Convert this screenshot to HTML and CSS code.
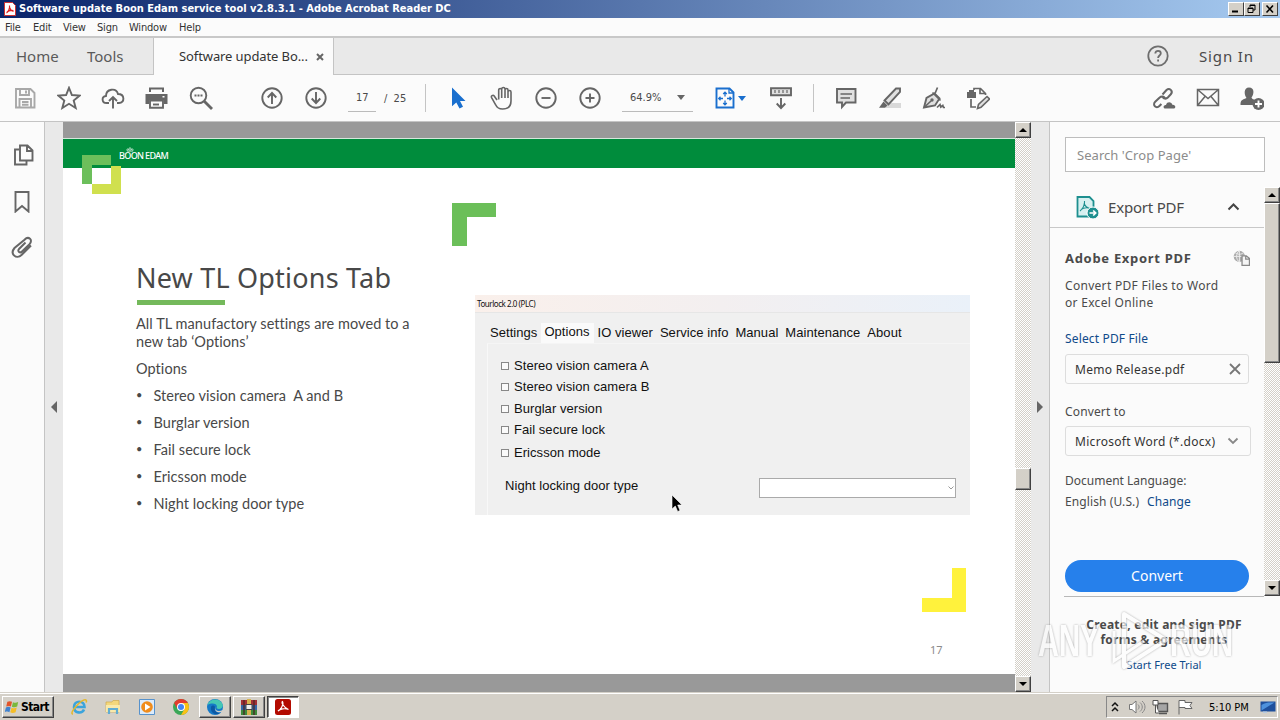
FILE: index.html
```html
<!DOCTYPE html>
<html lang="en">
<head>
    <meta charset="UTF-8">
    <meta name="viewport" content="width=device-width, initial-scale=1.0">
    <title>Software update Boon Edam service tool v2.8.3.1 - Adobe Acrobat Reader DC</title>
    <link rel="stylesheet" href="styles.css">
</head>
<body>
    <!-- Title bar -->
    <div class="title-bar">
        <svg class="app-icon" viewBox="0 0 12 14"><path d="M.5.5h8l3 3v10H.5z" fill="#fff" stroke="#c33"/><path d="M2.500 11c2-1 3.500-5 3-7.500M5.500 5c.5 2.500 2 4 4 4.500M3 10c1.500-1.500 4-2 6.500-1.500" fill="none" stroke="#d22" stroke-width="1.200"/></svg>
        <span class="title-text">Software update Boon Edam service tool v2.8.3.1 - Adobe Acrobat Reader DC</span>
        <div class="window-buttons">
            <span class="win-btn"><svg viewBox="0 0 12 10"><path d="M2 7.500h6" stroke="#000" stroke-width="2"/></svg></span>
            <span class="win-btn"><svg viewBox="0 0 12 10"><path d="M4 3V1h5v5H7M4 1.500h5M2 4h5v4.500H2zM2 4.500h5" fill="none" stroke="#000"/></svg></span>
            <span class="win-btn last"><svg viewBox="0 0 12 10"><path d="M2.500 1.500l6.500 7m0-7l-6.500 7" stroke="#000" stroke-width="1.600"/></svg></span>
        </div>
    </div>

    <!-- Menu -->
    <div class="menu-bar">
        <span class="m-file">File</span>
        <span class="m-edit">Edit</span>
        <span class="m-view">View</span>
        <span class="m-sign">Sign</span>
        <span class="m-window">Window</span>
        <span class="m-help">Help</span>
    </div>

    <!-- Tabs -->
    <div class="tab-bar">
        <div class="tabs-left"><span class="t-home">Home</span><span class="t-tools">Tools</span></div>
        <div class="tab-active"><span class="t-doc">Software update Bo...</span><svg viewBox="0 0 8 8"><path d="M1 1l6 6m0-6L1 7" stroke="#666" stroke-width="2"/></svg></div>
        <div class="tabs-right">
            <svg viewBox="0 0 24 24"><circle cx="12" cy="12" r="9.700"/><path d="M9.300 9.500c0-3.600 5.500-3.400 5.500-.2 0 2.200-2.700 2.200-2.700 4.600m0 1.600v2"/></svg>
            <span class="sign-in">Sign In</span>
        </div>
    </div>

    <!-- Toolbar -->
    <div class="toolbar">
        <div class="tool-group g-file">
            <svg class="pale" viewBox="0 0 24 24"><path d="M3 3h14.500L21.500 7v14.500H3zM7 3v6h9V3M13 4.500v3M6.500 21.500V13H18v8.500M9 16h6.500M9 18.700h6.500"/></svg>
            <svg viewBox="0 0 24 24"><path d="M12 1.800l2.900 7.200 7.800.5-6 5 2 7.500-6.700-4.200L5.300 22l2-7.500-6-5L9.100 9z"/></svg>
            <svg viewBox="0 0 24 24"><path d="M8 17H5.500C.5 17 .3 10.500 5 10 5 3 15 1 17 8c7 0 7 9 1 9h-2M12 22.500V11m-4 4l4-4 4 4"/></svg>
            <svg viewBox="0 0 24 24"><path class="fill" d="M4 1.500h15V6H4zM.5 8h22v10H19v-4H4v4H.5z"/><path d="M5 14.500h13v7.300H5z"/><path class="white" d="M6 3.500h11v4H6zM17.500 10h2v1.500h-2z"/><path d="M8 18.500h6"/></svg>
            <svg viewBox="0 0 24 24"><circle cx="9.500" cy="9.500" r="7.800"/><path d="M5.500 9.500h2m1 0h2m1 0h2" /><path d="M15 15l8 8" stroke-width="2.800"/></svg>
        </div>
        <div class="tool-group g-page">
            <svg viewBox="0 0 24 24"><circle cx="12" cy="12" r="9.700"/><path d="M12 18V6.500m-4.300 5L12 7l4.300 4.500"/></svg>
            <svg viewBox="0 0 24 24"><circle cx="12" cy="12" r="9.700"/><path d="M12 6v11.500m-4.300-5L12 17l4.300-4.500"/></svg>
        </div>
        <span class="page-field">17</span>
        <span class="page-total">/&nbsp; 25</span>
        <i class="divider d-one"></i>
        <div class="tool-group g-view">
            <svg viewBox="0 0 24 24"><path class="select-arrow" d="M6 1.500v18.800l4.300-3.800 3.200 6 3.500-1.700-3-5.800h5.500z"/></svg>
            <svg viewBox="0 0 24 24"><path d="M7 14L4 9.800c-1-1.300-3.300.1-2.400 1.800L5.800 19c1.200 2.700 3.400 4 6.700 4 5 0 8.500-2.700 8.500-8V6c0-2-3-2-3 0v6V4c0-2-3-2-3 0v8-9c0-2-3.300-2-3.300 0v9V4c0-2-3-2-3 0v9.500" stroke-width="1.600"/></svg>
            <svg viewBox="0 0 24 24"><circle cx="12" cy="12" r="9.700"/><path d="M7.500 12h9"/></svg>
            <svg viewBox="0 0 24 24"><circle cx="12" cy="12" r="9.700"/><path d="M7.500 12h9M12 7.500v9"/></svg>
        </div>
        <div class="zoom-field"><span class="zoom-value">64.9%</span><i class="caret"></i></div>
        <svg class="fit-icon" viewBox="0 0 24 24"><path d="M3.500 2.500h13l4 4v15h-17z"/><path d="M16 2.500v4.500h4.500M12 6.500v4m0 4v4M6 12.500h4m4 0h4M10.200 8L12 6.200 13.800 8m-3.600 9l1.800 1.800 1.800-1.800M7.500 10.700l-1.800 1.800 1.800 1.800m9-3.600l1.800 1.800-1.800 1.800" stroke-width="1.300"/></svg>
        <i class="caret blue"></i>
        <svg class="ruler-icon" viewBox="0 0 24 24"><path class="soft" d="M2 2.300h20v7H2z"/><path d="M6 4v3m4-3v3m4-3v3m4-3v3" stroke-width="1.200"/><path d="M12 12v10m-4.300-4.500L12 22l4.300-4.500"/></svg>
        <i class="divider d-two"></i>
        <div class="tool-group g-comment">
            <svg viewBox="0 0 24 24"><path class="soft" d="M3 3h18.500v13.500H12L8 21v-4.500H3z"/><path d="M6.500 8H18M6.500 12h9.500" stroke-width="1.400"/></svg>
            <svg viewBox="0 0 24 24"><path d="M10 17h13v5H7z" fill="#d9d9d9" stroke="none"/><path class="soft" d="M6.500 14.500L18 2.500h4v3.500L10.500 18.300z"/><path class="fill" d="M5.500 15.500l4 4-2.500 2.300H1z"/></svg>
            <svg viewBox="0 0 24 24"><path class="soft" d="M2 21.500L4.500 12l8-4.500 5 5-4.500 7z"/><path d="M2 21.500L9 15M10.500 6.500l8 8M13 7.500L15.500 1.500M15 21.500l3-3 .8 2.500 2-1.500.7 2H23" stroke-width="1.700"/><circle class="fill" cx="10" cy="14" r="1.700"/></svg>
            <svg viewBox="0 0 24 24"><path d="M8 4V2.500h6.500l5 5V9M14 3v4.500h5M5 13v8h5" stroke-width="1.700"/><path class="fill" d="M1 6h9v6H1zM3 4h5v3H3z"/><path class="soft" d="M11.500 22.500l1-4 8.500-8 2.500 2.500-8.500 8.300z" stroke-width="1.600"/></svg>
        </div>
        <div class="tool-group g-share">
            <svg viewBox="0 0 24 24"><path d="M10.500 8.500l4-4.500c3-2.700 7 1 4.300 4.300l-3 3.200c-2 2-4.300 1-5-.5M13 12c-1.500-2-3.800-2-5.300-.5l-4.500 4.300c-3.200 3.200 1 7.400 4.200 4.200l2-2" stroke-width="2"/><path class="fill" d="M12.500 22.500c-2-1-.5-4 1.500-3.500 1-4 6-3 6.300-.3 3-.4 4 2.800 2 3.800z"/></svg>
            <svg viewBox="0 0 24 24"><path d="M1.500 3.500h21v16h-21zl10.500 9 10.500-9m-21 16l7.500-9m13.500 9l-7.500-9" stroke-width="1.500"/></svg>
            <svg viewBox="0 0 24 24"><path class="fill" d="M9 1.500c6 0 5 7 2.500 10 .3 1.800 2.500 1.800 3.500 2.500-2 1.700-2.300 3.300-2 5H.5c0-4.500 1-5 6-7C4 8.500 3.500 1.500 9 1.500z"/><circle class="fill" cx="18.500" cy="18" r="6"/><path class="plus" d="M15 18h7m-3.500-3.500v7"/></svg>
        </div>
    </div>

    <!-- Work area -->
    <div class="main">
        <div class="rail">
            <svg viewBox="0 0 24 24"><path d="M9 2.500h7.500l5 5V17.500H9zM16 2.500V8h5.500M8 6.500H4v15h11.500V18.500"/></svg>
            <svg viewBox="0 0 24 24"><path d="M4.500 3h13v19.500L11 17l-6.500 5.500z"/></svg>
            <svg viewBox="0 0 24 24"><path d="M14.500 7.500l-6.500 6.500c-2 2.500 1 4.500 3 2.500l7.500-7.300c4-4.500-1-8.500-5-4.500L3.500 13c-5 6 2 12 7 7l9.500-9.500" stroke-width="2"/></svg>
        </div>
        <div class="gutter"><i class="arrow-left"></i></div>

        <div class="document">
            <div class="slide">
                <div class="slide-header">
                    <div class="brand"><svg viewBox="0 0 10 6"><path d="M1.500 5h7M2 5C-.5 2 3 1.500 4 4c0-2-1-2 1-3.500C7 2 6 2 6 4c1-2.500 4.500-2 2 1" fill="none" stroke="#fff" stroke-width=".9"/></svg><span>BOON EDAM</span></div>
                </div>
                <svg class="logo" viewBox="0 0 39 39"><path fill="#6cbf5b" d="M0 0h29v10H10v19H0z"/><path fill="#d0e04e" d="M29 11h10v28H10V29h19z"/><path fill="#fff" d="M10 13h19v16H10z"/></svg>
                <svg class="corner-green" viewBox="0 0 44 43"><path fill="#6bbf59" d="M0 0h44v14H15v29H0z"/></svg>
                <svg class="corner-yellow" viewBox="0 0 44 44"><path fill="#fff23c" d="M30 0h14v44H0V30h30z"/></svg>

                <div class="slide-body">
                    <div class="slide-text">
                        <h1>New TL Options Tab</h1>
                        <div class="underline"></div>
                        <p>All TL manufactory settings are moved to a<br>new tab ‘Options’</p>
                        <p>Options</p>
                        <ul>
                            <li>Stereo vision camera&nbsp; A and B</li>
                            <li>Burglar version</li>
                            <li>Fail secure lock</li>
                            <li>Ericsson mode</li>
                            <li>Night locking door type</li>
                        </ul>
                    </div>

                    <div class="tourlock">
                        <div class="tl-title">Tourlock 2.0 (PLC)</div>
                        <div class="tl-tabs">
                            <span>Settings</span>
                            <span class="selected">Options</span>
                            <span>IO viewer</span>
                            <span>Service info</span>
                            <span>Manual</span>
                            <span>Maintenance</span>
                            <span>About</span>
                        </div>
                        <div class="tl-page">
                            <div class="check"><i></i>Stereo vision camera A</div>
                            <div class="check"><i></i>Stereo vision camera B</div>
                            <div class="check"><i></i>Burglar version</div>
                            <div class="check"><i></i>Fail secure lock</div>
                            <div class="check lower"><i></i>Ericsson mode</div>
                            <div class="door-row">
                                <span>Night locking door type</span>
                                <div class="door-select"><svg viewBox="0 0 8 6"><path d="M1.500 1.500L4 4l2.500-2.500" fill="none" stroke="#999"/></svg></div>
                            </div>
                        </div>
                    </div>
                </div>
                <div class="slide-number">17</div>
            </div>
        </div>

        <div class="scrollbar doc-scroll">
            <i class="sb-btn up"></i>
            <i class="sb-thumb"></i>
            <i class="sb-btn down"></i>
        </div>
        <div class="gutter right"><i class="arrow-right"></i></div>

        <div class="side-panel">
            <div class="search-box">Search 'Crop Page'</div>
            <div class="panel-scroll">
                <div class="panel-content">
                    <div class="export-head">
                        <svg class="export-icon" viewBox="0 0 24 24"><path d="M2.500 2h12l4 4v15.500h-16z" fill="#d7f0f0" stroke="#1d8f8f" stroke-width="1.800"/><path d="M5 16c3-2 5-7 4.500-10M9 8c1 3 3 5 6 5.500M6 14.500c2-1.500 5-2 8-1.500" fill="none" stroke="#1d8f8f" stroke-width="1.100"/><circle cx="18" cy="18" r="6" fill="#1d8f8f" stroke="#fff"/><path d="M14.500 18h6m-2.300-2.500l2.500 2.500-2.500 2.500" fill="none" stroke="#fff" stroke-width="1.700"/></svg>
                        <span class="export-label">Export PDF</span>
                        <svg class="chevron-up" viewBox="0 0 12 8"><path d="M1 6.500l5-5 5 5" fill="none" stroke="#444" stroke-width="2"/></svg>
                    </div>
                    <div class="export-body">
                        <div class="export-title"><span>Adobe Export PDF</span>
                            <svg viewBox="0 0 16 16"><circle cx="6" cy="6" r="5.300" fill="#aaa"/><path d="M6 .5v11M.5 6h11M2 2.500c3 2 5 2 8 0M6 .7C2.500 3 2.500 9 6 11.300" fill="none" stroke="#eee" stroke-width=".9"/><path d="M8.500 5.500h4L15.500 8v6.500h-7zM12 5.500v3h3.500" fill="#f5f5f5" stroke="#888" stroke-width="1.200"/></svg>
                        </div>
                        <div class="export-desc">Convert PDF Files to Word<br>or Excel Online</div>
                        <a class="select-file">Select PDF File</a>
                        <div class="file-box"><span>Memo Release.pdf</span><svg viewBox="0 0 12 12"><path d="M1 1l10 10m0-10L1 11" stroke="#777" stroke-width="1.800"/></svg></div>
                        <div class="convert-to">Convert to</div>
                        <div class="format-box"><span>Microsoft Word (*.docx)</span><svg viewBox="0 0 12 8"><path d="M1.500 1.500L6 6l4.500-4.500" fill="none" stroke="#888" stroke-width="1.800"/></svg></div>
                        <div class="lang-title">Document Language:</div>
                        <div class="lang-row"><span class="l-name">English (U.S.)</span><a>Change</a></div>
                        <div class="convert-btn">Convert</div>
                    </div>
                </div>
                <div class="scrollbar panel-bar">
                    <i class="sb-btn up"></i>
                    <i class="sb-thumb tall"></i>
                    <i class="sb-btn down"></i>
                </div>
            </div>
            <div class="panel-footer">
                <b>Create, edit and sign PDF<br>forms &amp; agreements</b>
                <a>Start Free Trial</a>
            </div>
        </div>
    </div>

    <!-- Taskbar -->
    <div class="taskbar">
        <div class="start-btn">
            <svg viewBox="0 0 16 14"><path fill="#e2552b" d="M2.500 1.500c2-1 3.500-.8 5 0L6.300 6.500c-1.500-.8-3-1-5 0z"/><path fill="#7ab83c" d="M8.500 2c2 .8 3.500.8 5.500-.3L13 6.500c-2 1-3.800 1-5.700.2z"/><path fill="#3f82d0" d="M1 7.500c2-1 3.500-.8 5 0L4.700 12.500c-1.500-.8-3-1-5 0z"/><path fill="#f5bd27" d="M7 7.700c2 .8 3.500.8 5.500-.2l-1.200 5c-2 1-3.800 1-5.700.2z"/></svg>
            <span>Start</span>
        </div>
        <div class="quick-launch">
            <svg viewBox="0 0 18 18"><path d="M4 9h10.500c0-7-10.500-7-10.500 0 0 6.500 8 7 10 2.500" fill="none" stroke="#3ba4dc" stroke-width="2.600"/><path d="M3 16C-2 16 12 0 16 2c1 .7 0 2.500 0 2.500" fill="none" stroke="#e5b82c" stroke-width="1.500"/></svg>
            <svg viewBox="0 0 18 18"><path fill="#f3d77c" stroke="#cfaa4d" stroke-width=".7" d="M2 4h6l1-1.500h6V14H2z"/><path fill="#f9e9aa" d="M2 7h14v7H2z"/><path d="M5 16v-5h8v5" fill="none" stroke="#61add3" stroke-width="2.200"/></svg>
            <svg viewBox="0 0 18 18"><path fill="#dcebfb" stroke="#5792cc" d="M1.500 1.500h15v15h-15z"/><circle cx="9" cy="9" r="5.800" fill="#f08c1c"/><path fill="#fff" d="M7 5.500l5.500 3.500L7 12.500z"/></svg>
            <svg viewBox="0 0 18 18"><circle cx="9" cy="9" r="8" fill="#3aa757"/><path fill="#e33b2e" d="M2.100 5a8 8 0 0 1 13.800 0H9l-3.500 6z"/><path fill="#fbc116" d="M15.900 5A8 8 0 0 1 9 17l3.500-6L9 5z"/><circle cx="9" cy="9" r="4" fill="#fff"/><circle cx="9" cy="9" r="3" fill="#4285f4"/></svg>
        </div>
        <div class="task-btn"><svg viewBox="0 0 18 18"><circle cx="9" cy="9" r="8" fill="#1579c7"/><path fill="#45c7b4" d="M1.500 7C3 1 13-1 16.500 6c1.500 5-4 6-6 4 2-4-4-6-9-3z"/><path fill="#0c59a4" d="M5 9c-1 6 5 9 9 6-4 0-6-3-5-6-1-2-3-2-4 0z"/><path fill="#d4d0c8" d="M9.500 9c-1 4 3 5 7.500 3v1.500c-5 2-9 0-7.500-4.500z"/></svg></div>
        <div class="task-btn"><svg viewBox="0 0 18 18"><path fill="#a12f35" d="M1 2h16v5H1z"/><path fill="#3366a8" d="M1 7h16v5H1z"/><path fill="#3e8b3c" d="M1 12h16v5H1z"/><path fill="#d8b34e" d="M7 1h4v16H7z"/><path d="M4 2v15M14 2v15" stroke="#4a2525" stroke-width="1.300"/><path fill="#eee" stroke="#444" d="M6 6.500h6v5H6z"/></svg></div>
        <div class="task-btn pressed"><svg viewBox="0 0 18 18"><rect x="1" y="1" width="16" height="16" rx="2.500" fill="#b30b00"/><path d="M4 13c3-1 6-7 4.500-9.500C7 4 9 9 14.500 11.500 11 10 6 11 4 13z" fill="none" stroke="#fff" stroke-width="1.200"/></svg></div>
        <div class="tray">
            <svg class="tr-up" viewBox="0 0 8 12"><path d="M1 5l3-3 3 3M1 10l3-3 3 3" fill="none" stroke="#111" stroke-width="1.500"/></svg>
            <svg class="tr-sound" viewBox="0 0 18 16"><path d="M1.500 5.500H4L8 2v12l-4-3.500H1.500z" fill="#fff" stroke="#777"/><path d="M10 5.500c1.500 1.500 1.500 3.500 0 5M12 3.500c3 2.500 3 6.500 0 9M14 2c4 3.500 4 8.500 0 12" fill="none" stroke="#888"/></svg>
            <svg class="tr-net" viewBox="0 0 17 16"><path d="M5.500 4.500h10v8h-10zM7 14.500h8" fill="#a5a5a5" stroke="#555" stroke-width="1.400"/><path d="M1 1.500h5V6H1zM3.500 6v8H7" fill="#fff" stroke="#555"/></svg>
            <svg class="tr-flag" viewBox="0 0 17 16"><path d="M2 15.500V1.500h6v2h7l-2 3 2 3H8v-1H2" fill="#fff" stroke="#666"/></svg>
            <span class="clock">5:10 PM</span>
            <svg class="tr-desk" viewBox="0 0 16 13"><path fill="#1e4f9c" d="M.5.500h15v10H.5z"/><path fill="#4e91dc" d="M1.500 9.500V4c4-3 8-2.500 13-2.500z"/><path fill="#b7cbe2" d="M3 10.500h4V12H3z"/></svg>
        </div>
    </div>

    <!-- Watermark -->
    <div class="watermark">
        <span>ANY</span>
        <svg viewBox="0 0 66 60"><path d="M20 3l42 26-42 27V3z" fill="none" stroke="#fff" stroke-width="4" stroke-linejoin="round"/><path d="M10 20v30l30-20" fill="none" stroke="#fff" stroke-width="3"/></svg>
        <span>RUN</span>
    </div>

    <!-- Pointer -->
    <svg class="pointer" viewBox="0 0 12 19"><path d="M1 1v14l3.300-3 2.400 5.500 2.300-1L6.700 11H11z" fill="#000" stroke="#fff" stroke-width=".6"/></svg>
</body>
</html>
```

FILE: styles.css
```css
* {
    box-sizing: border-box;
}

body {
    margin: 0;
    width: 1280px;
    height: 720px;
    overflow: hidden;
    display: flex;
    flex-direction: column;
    position: relative;
    background-color: #fbfbfb;
    font-family: 'Noto Sans', 'Open Sans', sans-serif;
    color: #4a4a4a;
    white-space: nowrap;
}

svg {
    display: block;
    flex: none;
}

/* Title bar */
.title-bar {
    height: 18px;
    flex: none;
    display: flex;
    align-items: center;
    padding: 0 2px 0 4px;
    background: linear-gradient(to right, #0a246a, #a6caf0);
}

.app-icon {
    width: 12px;
    height: 14px;
}

.title-text {
    margin-left: 3px;
    font: bold 11px/18px 'DejaVu Sans Condensed', 'DejaVu Sans', sans-serif;
    color: #fff;
}

.window-buttons {
    display: flex;
    margin-left: auto;
}

.win-btn {
    width: 16px;
    height: 14px;
    padding: 1px;
    background-color: #d4d0c8;
    border: 1px solid;
    border-color: #fff #404040 #404040 #fff;
}

.win-btn.last {
    margin-left: 2px;
}

/* Menu */
.menu-bar {
    height: 20px;
    flex: none;
    display: flex;
    padding: 1px 0 0 5px;
    border-bottom: 2px solid #c8c8c8;
    font: 11px/18px 'DejaVu Sans Condensed', 'DejaVu Sans', sans-serif;
    letter-spacing: -0.2px;
    color: #333;
}

.m-file { width: 28px; }
.m-edit { width: 30px; }
.m-view { width: 34px; }
.m-sign { width: 32px; }
.m-window { width: 50px; }

/* Tabs */
.tab-bar {
    height: 37px;
    flex: none;
    display: flex;
    background-color: #e9e9e9;
    line-height: 37px;
    font-size: 15px;
}

.tabs-left {
    width: 154px;
    display: flex;
    padding-left: 16px;
    border-right: 1px solid #c4c4c4;
    border-bottom: 1px solid #c4c4c4;
    color: #5a5a5a;
}

.t-home { width: 71px; }

.tab-active {
    width: 180px;
    display: flex;
    align-items: center;
    padding-left: 25px;
    background-color: #fbfbfb;
    border-right: 1px solid #c4c4c4;
    font-size: 13px;
    letter-spacing: -0.1px;
    color: #333;
}

.t-doc { width: 137px; }

.tab-active svg {
    width: 8px;
    height: 8px;
}

.tabs-right {
    flex: 1;
    display: flex;
    align-items: center;
    justify-content: flex-end;
    padding-right: 26px;
    border-bottom: 1px solid #c4c4c4;
}

.tabs-right svg {
    width: 24px;
    height: 24px;
    fill: none;
    stroke: #6e6e6e;
    stroke-width: 1.8;
}

.sign-in {
    width: 55px;
    margin-left: 29px;
    letter-spacing: 0.85px;
}

/* Toolbar */
.toolbar {
    height: 47px;
    flex: none;
    display: flex;
    align-items: center;
    border-bottom: 1px solid #c4c4c4;
    font: 11px 'DejaVu Sans Condensed', 'DejaVu Sans', sans-serif;
}

.tool-group {
    display: flex;
    gap: 20px;
}

.toolbar svg {
    width: 24px;
    height: 24px;
    fill: none;
    stroke: #666;
    stroke-width: 1.9;
}

.toolbar svg .fill {
    fill: #666;
    stroke: none;
}

.toolbar svg .soft {
    fill: #e0e0e0;
}

.toolbar svg .white {
    fill: #fbfbfb;
    stroke: none;
}

.toolbar svg .select-arrow {
    fill: #1a6fce;
    stroke: none;
}

.toolbar svg .plus {
    stroke: #fff;
}

.toolbar svg.pale {
    stroke: #a8a8a8;
}

.g-file { margin-left: 13px; }
.g-page { margin-left: 47px; }
.g-view { margin-left: 20px; }
.g-comment { margin-left: 20px; }
.g-share { margin-left: 162px; }

.page-field {
    width: 28px;
    height: 28px;
    margin-left: 20px;
    line-height: 28px;
    padding-left: 8px;
    border-bottom: 1px solid #bbb;
}

.page-total {
    width: 42px;
    padding-left: 8px;
}

.divider {
    width: 1px;
    height: 28px;
    background-color: #c4c4c4;
}

.d-one { margin-left: 7px; }
.d-two { margin-left: 20px; }

.zoom-field {
    width: 71px;
    height: 28px;
    margin-left: 20px;
    padding: 0 8px;
    display: flex;
    align-items: center;
    justify-content: space-between;
    border-bottom: 1px solid #bbb;
}

.caret {
    border: 4px solid transparent;
    border-top: 5px solid #666;
    border-bottom: 0;
}

.caret.blue {
    border-top-color: #1a6fce;
    margin-left: 1px;
}

.toolbar .fit-icon {
    margin-left: 20px;
    stroke: #1a6fce;
}

.toolbar .ruler-icon {
    margin-left: 23px;
}

/* Work area */
.main {
    height: 570px;
    flex: none;
    display: flex;
}

.rail {
    width: 45px;
    padding: 21px 0 0 11px;
    display: flex;
    flex-direction: column;
    gap: 22px;
    border-right: 1px solid #c4c4c4;
}

.rail svg {
    width: 24px;
    height: 24px;
    fill: none;
    stroke: #666;
    stroke-width: 1.9;
}

.gutter {
    width: 18px;
    display: flex;
    align-items: center;
    padding-left: 6px;
    background-color: #e9e9e9;
}

.arrow-left,
.arrow-right {
    border: 6px solid transparent;
    border-right-color: #666;
    border-left: 0;
}

.arrow-right {
    border-right: 0;
    border-left: 6px solid #666;
}

.document {
    width: 952px;
    padding: 16px 0 18px;
    background-color: #999;
}

.slide {
    height: 536px;
    position: relative;
    background-color: #fff;
    color: #484848;
}

.slide-header {
    height: 30px;
    padding: 8px 0 0 56px;
    background-color: #008c3c;
    border-top: 1px solid #d5e8dc;
}

.brand {
    width: 50px;
    font: 500 9px/9px 'Noto Sans', sans-serif;
    letter-spacing: -0.65px;
    color: #fff;
}

.brand svg {
    width: 8px;
    height: 5px;
    margin: 0 0 0 7px;
}

.brand span {
    display: block;
    margin-top: -1px;
}

.logo {
    position: absolute;
    left: 19px;
    top: 17px;
    width: 39px;
    height: 39px;
}

.corner-green {
    position: absolute;
    left: 389px;
    top: 65px;
    width: 44px;
    height: 43px;
}

.corner-yellow {
    position: absolute;
    left: 859px;
    top: 430px;
    width: 44px;
    height: 44px;
}

.slide-body {
    display: flex;
    padding-left: 73px;
}

.slide-text {
    width: 339px;
    padding-top: 92px;
    font: 14.5px/18px Lato, 'Noto Sans', sans-serif;
    letter-spacing: 0.06px;
}

.slide-text h1 {
    margin: 0;
    font: 400 27px/36px 'Noto Sans', sans-serif;
    letter-spacing: 0.2px;
}

.underline {
    width: 88px;
    height: 5px;
    margin: 4px 0 10px 1px;
    background-color: #74b95b;
}

.slide-text p {
    margin: 0 0 9px;
}

.slide-text ul {
    margin: 0;
    padding: 0;
    list-style: none;
}

.slide-text li {
    display: flex;
    margin-bottom: 9px;
}

.slide-text li::before {
    content: "•";
    width: 17.500px;
    font-size: 11px;
    line-height: 16px;
}

.tourlock {
    width: 495px;
    height: 220px;
    margin-top: 127px;
    background-color: #f0f0f0;
    font: 13px/16px 'Liberation Sans', Arial, sans-serif;
    letter-spacing: 0.05px;
    color: #111;
}

.tl-title {
    height: 18px;
    padding-left: 2px;
    background: linear-gradient(to right, #faf0eb, #f3eff0 50%, #eaf1f9);
    border-bottom: 1px solid #e6e6e6;
    font: 8px/17px 'Noto Sans', sans-serif;
    letter-spacing: -0.45px;
}

.tl-tabs {
    height: 30px;
    display: flex;
    align-items: flex-end;
    padding-left: 12px;
}

.tl-tabs span {
    height: 20px;
    margin-right: 1px;
    padding: 0 3px;
    line-height: 20px;
}

.tl-tabs .selected {
    background-color: #fafafa;
    line-height: 17px;
    padding-right: 4px;
}

.tl-page {
    height: 172px;
    margin-left: 12px;
    padding: 11px 14px 0;
    border-left: 1px solid #f8f8f8;
    border-top: 1px solid #f5f5f5;
}

.check {
    height: 21.500px;
    display: flex;
    align-items: center;
    line-height: 16px;
    margin-left: -1px;
}

.check.lower {
    margin-top: 1px;
}

.check i {
    width: 8px;
    height: 8px;
    margin-right: 5px;
    border: 1px solid #888;
    background-color: #fafafa;
}

.door-row {
    display: flex;
    justify-content: space-between;
    margin-top: 14px;
    padding-left: 3px;
}

.door-select {
    width: 197px;
    height: 20px;
    display: flex;
    align-items: center;
    justify-content: flex-end;
    background-color: #fff;
    border: 1px solid #aaa;
}

.door-select svg {
    width: 8px;
    height: 6px;
}

.slide-number {
    position: absolute;
    left: 867px;
    top: 504px;
    font: 11px/16px 'Noto Sans', sans-serif;
    color: #8c8c8c;
}

/* Classic scrollbars */
.scrollbar {
    width: 16px;
    display: flex;
    flex-direction: column;
    justify-content: space-between;
    background: repeating-conic-gradient(#fff 0 25%, #d4d0c8 0 50%) 0 0 / 2px 2px;
}

.sb-btn {
    width: 16px;
    height: 16px;
    display: flex;
    align-items: center;
    justify-content: center;
    background-color: #d4d0c8;
    border: 1px solid;
    border-color: #fff #404040 #404040 #fff;
    box-shadow: inset -1px -1px #888;
}

.sb-btn::before {
    content: "";
    border: 4px solid transparent;
    border-top: 0;
    border-bottom-color: #000;
}

.sb-btn.down::before {
    border-top: 4px solid #000;
    border-bottom: 0;
}

.sb-thumb {
    height: 22px;
    background-color: #d4d0c8;
    border: 1px solid;
    border-color: #fff #404040 #404040 #fff;
    box-shadow: inset -1px -1px #888;
}

.doc-scroll .sb-thumb {
    margin: 330px 0 auto;
}

.sb-thumb.tall {
    height: 160px;
    margin: 0 0 auto;
}

/* Right panel */
.side-panel {
    width: 231px;
    border-left: 1px solid #c4c4c4;
    padding-top: 15px;
    display: flex;
    flex-direction: column;
    font-size: 12px;
    letter-spacing: 0.3px;
}

.search-box {
    width: 200px;
    height: 35px;
    margin-left: 15px;
    padding-left: 11px;
    border: 1px solid #bdbdbd;
    background-color: #fff;
    font-size: 13px;
    line-height: 34px;
    letter-spacing: 0.05px;
    color: #8c8c8c;
}

.panel-scroll {
    height: 409px;
    display: flex;
    margin-top: 15px;
}

.panel-content {
    width: 214px;
}

.export-head {
    height: 41px;
    display: flex;
    align-items: center;
    padding-left: 25px;
    border-bottom: 1px solid #c8c8c8;
}

.export-icon {
    width: 24px;
    height: 24px;
}

.export-label {
    width: 119px;
    margin-left: 9px;
    font-size: 15px;
    letter-spacing: -0.2px;
}

.chevron-up {
    width: 13px;
    height: 8px;
}

.export-body {
    padding: 20px 0 0 15px;
}

.export-title {
    width: 185px;
    height: 20px;
    display: flex;
    align-items: center;
    justify-content: space-between;
    font-size: 13px;
    font-weight: bold;
    line-height: 20px;
    letter-spacing: 0.7px;
}

.export-title svg {
    width: 17px;
    height: 17px;
}

.export-desc {
    margin-top: 9px;
    line-height: 17px;
}

a {
    color: #0f4a8a;
}

.select-file {
    display: block;
    margin-top: 19px;
    line-height: 17px;
    letter-spacing: 0.15px;
}

.file-box,
.format-box {
    width: 184px;
    height: 30px;
    margin-top: 7px;
    padding: 0 7px 0 9px;
    display: flex;
    align-items: center;
    justify-content: space-between;
    border: 1px solid #ddd;
    border-radius: 3px;
    color: #333;
}

.file-box svg {
    width: 12px;
    height: 12px;
}

.convert-to {
    margin-top: 19px;
    line-height: 17px;
    letter-spacing: 0.15px;
}

.format-box {
    width: 186px;
    margin-top: 6px;
    padding-right: 11px;
}

.format-box svg {
    width: 12px;
    height: 8px;
}

.lang-title {
    margin-top: 16px;
    line-height: 17px;
    letter-spacing: 0;
}

.lang-row {
    display: flex;
    margin-top: 4px;
    line-height: 17px;
    letter-spacing: 0.1px;
}

.l-name {
    width: 82px;
}

.convert-btn {
    width: 184px;
    height: 32px;
    margin-top: 50px;
    border-radius: 16px;
    background-color: #2680eb;
    color: #fff;
    font-size: 14px;
    line-height: 31px;
    letter-spacing: 0;
    text-align: center;
}

.panel-footer {
    flex: 1;
    width: 200px;
    margin-left: 14px;
    padding-top: 20px;
    border-top: 1px solid #b8b8b8;
    text-align: center;
    font-size: 11px;
    line-height: 15px;
    letter-spacing: 0;
}

.panel-footer b {
    display: block;
    font-size: 12px;
    letter-spacing: 0.25px;
}

.panel-footer a {
    display: block;
    margin-top: 10px;
}

/* Taskbar */
.taskbar {
    height: 28px;
    flex: none;
    display: flex;
    align-items: center;
    padding: 1px 2px 0;
    background-color: #d4d0c8;
    border-top: 1px solid #d4d0c8;
    box-shadow: inset 0 1px #fff;
}

.start-btn {
    width: 52px;
    height: 22px;
    display: flex;
    align-items: center;
    padding-left: 2px;
    border: 1px solid;
    border-color: #fff #404040 #404040 #fff;
    box-shadow: inset -1px -1px #888;
    font: bold 12px 'DejaVu Sans Condensed', 'DejaVu Sans', sans-serif;
    letter-spacing: -0.6px;
    color: #000;
}

.start-btn svg {
    width: 15px;
    height: 14px;
    margin-right: 1px;
}

.quick-launch {
    display: flex;
    gap: 16px;
    margin: 0 9px 0 16px;
}

.quick-launch svg,
.task-btn svg {
    width: 18px;
    height: 18px;
}

.task-btn {
    width: 32px;
    height: 22px;
    margin-right: 2px;
    display: flex;
    align-items: center;
    justify-content: center;
    border: 1px solid;
    border-color: #fff #404040 #404040 #fff;
    box-shadow: inset -1px -1px #888;
}

.task-btn.pressed {
    background-color: #fff;
    border-color: #404040 #fff #fff #404040;
    box-shadow: inset 1px 1px #888;
}

.tray {
    width: 172px;
    height: 22px;
    margin-left: auto;
    display: flex;
    align-items: center;
    border: 1px solid;
    border-color: #888 #fff #fff #888;
}

.tr-up {
    width: 8px;
    height: 12px;
    margin-left: 4px;
}

.tr-sound {
    width: 18px;
    height: 16px;
    margin-left: 9px;
}

.tr-net {
    width: 17px;
    height: 16px;
    margin-left: 6px;
}

.tr-flag {
    width: 17px;
    height: 16px;
    margin-left: 8px;
}

.clock {
    width: 51px;
    margin-left: 15px;
    font: 11px 'DejaVu Sans Condensed', 'DejaVu Sans', sans-serif;
    color: #000;
}

.tr-desk {
    width: 16px;
    height: 13px;
}

/* Overlays */
.watermark {
    position: absolute;
    left: 1038px;
    top: 611px;
    display: flex;
    align-items: center;
    font: bold 44px/60px 'Liberation Sans', sans-serif;
    color: #fff;
    opacity: 0.65;
    filter: drop-shadow(0 0 1px #888);
}

.watermark span {
    width: 66px;
    transform: scaleX(0.66);
    transform-origin: left;
}

.watermark svg {
    width: 66px;
    height: 60px;
}

.pointer {
    position: absolute;
    left: 671px;
    top: 494px;
    width: 12px;
    height: 19px;
}
```
